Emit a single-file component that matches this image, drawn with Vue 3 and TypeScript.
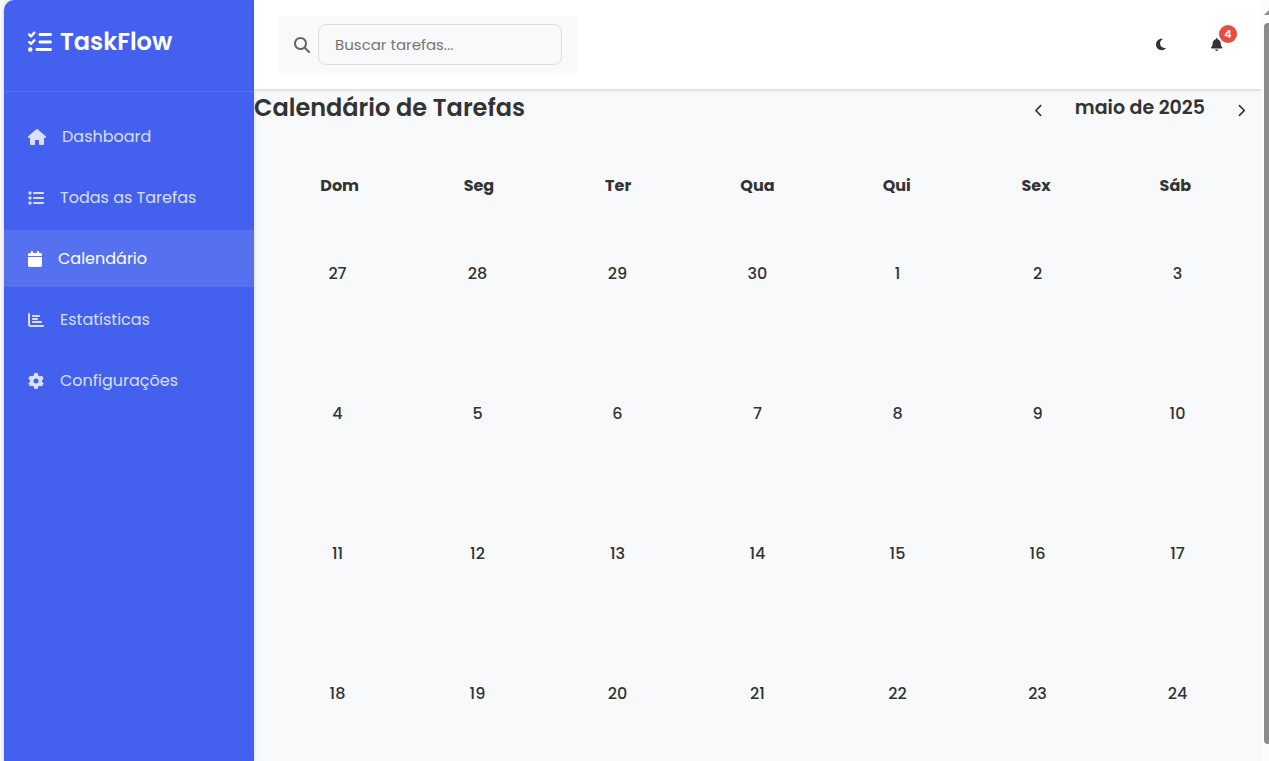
<script setup lang="ts">
interface Icon {
  width: number
  path: string
}

interface NavItem {
  label: string
  icon: Icon
  active?: boolean
}

const icons: Record<string, Icon> = {
  logo: {
    width: 512,
    path: 'M152.1 38.2c9.9 8.9 10.7 24 1.8 33.9l-72 80c-4.4 4.9-10.6 7.8-17.2 7.9s-12.9-2.4-17.6-7L7 113C-2.3 103.6-2.3 88.4 7 79s24.6-9.4 33.9 0l22.1 22.1 55.1-61.2c8.9-9.9 24-10.7 33.9-1.8zm0 160c9.9 8.9 10.7 24 1.8 33.9l-72 80c-4.4 4.9-10.6 7.8-17.2 7.9s-12.9-2.4-17.6-7L7 273c-9.4-9.4-9.4-24.6 0-33.9s24.6-9.4 33.9 0l22.1 22.1 55.1-61.2c8.9-9.9 24-10.7 33.9-1.8zM224 96c0-17.7 14.3-32 32-32H480c17.7 0 32 14.3 32 32s-14.3 32-32 32H256c-17.7 0-32-14.3-32-32zm0 160c0-17.7 14.3-32 32-32H480c17.7 0 32 14.3 32 32s-14.3 32-32 32H256c-17.7 0-32-14.3-32-32zM160 416c0-17.7 14.3-32 32-32H480c17.7 0 32 14.3 32 32s-14.3 32-32 32H192c-17.7 0-32-14.3-32-32zM48 368a48 48 0 1 1 0 96 48 48 0 1 1 0-96z',
  },
  home: {
    width: 576,
    path: 'M575.8 255.5c0 18-15 32.1-32 32.1h-32l.7 160.2c0 2.7-.2 5.4-.5 8.1V472c0 22.1-17.9 40-40 40H456c-1.1 0-2.2 0-3.3-.1c-1.4 .1-2.8 .1-4.2 .1H416 392c-22.1 0-40-17.9-40-40V448 384c0-17.7-14.3-32-32-32H256c-17.7 0-32 14.3-32 32v64 24c0 22.1-17.9 40-40 40H160 128.1c-1.5 0-3-.1-4.5-.2c-1.2 .1-2.4 .2-3.6 .2H104c-22.1 0-40-17.9-40-40V360c0-.9 0-1.9 .1-2.8V287.6H32c-18 0-32-14-32-32.1c0-9 3-17 10-24L266.4 8c7-7 15-8 22-8s15 2 21 7L564.8 231.5c8 7 12 15 11 24z',
  },
  list: {
    width: 512,
    path: 'M40 48C26.7 48 16 58.7 16 72v48c0 13.3 10.7 24 24 24H88c13.3 0 24-10.7 24-24V72c0-13.3-10.7-24-24-24H40zM192 64c-17.7 0-32 14.3-32 32s14.3 32 32 32H480c17.7 0 32-14.3 32-32s-14.3-32-32-32H192zm0 160c-17.7 0-32 14.3-32 32s14.3 32 32 32H480c17.7 0 32-14.3 32-32s-14.3-32-32-32H192zm0 160c-17.7 0-32 14.3-32 32s14.3 32 32 32H480c17.7 0 32-14.3 32-32s-14.3-32-32-32H192zM16 232v48c0 13.3 10.7 24 24 24H88c13.3 0 24-10.7 24-24V232c0-13.3-10.7-24-24-24H40c-13.3 0-24 10.7-24 24zM40 368c-13.3 0-24 10.7-24 24v48c0 13.3 10.7 24 24 24H88c13.3 0 24-10.7 24-24V392c0-13.3-10.7-24-24-24H40z',
  },
  calendar: {
    width: 448,
    path: 'M96 32V64H48C21.5 64 0 85.5 0 112v48H448V112c0-26.5-21.5-48-48-48H352V32c0-17.7-14.3-32-32-32s-32 14.3-32 32V64H160V32c0-17.7-14.3-32-32-32S96 14.3 96 32zM448 192H0V464c0 26.5 21.5 48 48 48H400c26.5 0 48-21.5 48-48V192z',
  },
  chart: {
    width: 512,
    path: 'M32 32c17.7 0 32 14.3 32 32V400c0 8.8 7.2 16 16 16H480c17.7 0 32 14.3 32 32s-14.3 32-32 32H80c-44.2 0-80-35.8-80-80V64C0 46.3 14.3 32 32 32zm96 96c0-17.7 14.3-32 32-32l192 0c17.7 0 32 14.3 32 32s-14.3 32-32 32l-192 0c-17.7 0-32-14.3-32-32zm32 64H288c17.7 0 32 14.3 32 32s-14.3 32-32 32H160c-17.7 0-32-14.3-32-32s14.3-32 32-32zm0 96H416c17.7 0 32 14.3 32 32s-14.3 32-32 32H160c-17.7 0-32-14.3-32-32s14.3-32 32-32z',
  },
  gear: {
    width: 512,
    path: 'M495.9 166.6c3.2 8.7 .5 18.4-6.4 24.6l-43.3 39.4c1.1 8.3 1.7 16.8 1.7 25.4s-.6 17.1-1.7 25.4l43.3 39.4c6.9 6.2 9.6 15.9 6.4 24.6c-4.4 11.9-9.7 23.3-15.8 34.3l-4.7 8.1c-6.6 11-14 21.4-22.1 31.2c-5.9 7.2-15.7 9.6-24.5 6.8l-55.7-17.7c-13.4 10.3-28.2 18.9-44 25.4l-12.5 57.1c-2 9.1-9 16.3-18.2 17.8c-13.8 2.3-28 3.5-42.5 3.5s-28.7-1.2-42.5-3.5c-9.2-1.5-16.2-8.7-18.2-17.8l-12.5-57.1c-15.8-6.5-30.6-15.1-44-25.4L83.1 425.9c-8.8 2.8-18.6 .3-24.5-6.8c-8.1-9.8-15.5-20.2-22.1-31.2l-4.7-8.1c-6.1-11-11.4-22.4-15.8-34.3c-3.2-8.7-.5-18.4 6.4-24.6l43.3-39.4C64.6 273.1 64 264.6 64 256s.6-17.1 1.7-25.4L22.4 191.2c-6.9-6.2-9.6-15.9-6.4-24.6c4.4-11.9 9.7-23.3 15.8-34.3l4.7-8.1c6.6-11 14-21.4 22.1-31.2c5.9-7.2 15.7-9.6 24.5-6.8l55.7 17.7c13.4-10.3 28.2-18.9 44-25.4l12.5-57.1c2-9.1 9-16.3 18.2-17.8C227.3 1.2 241.5 0 256 0s28.7 1.2 42.5 3.5c9.2 1.5 16.2 8.7 18.2 17.8l12.5 57.1c15.8 6.5 30.6 15.1 44 25.4l55.7-17.7c8.8-2.8 18.6-.3 24.5 6.8c8.1 9.8 15.5 20.2 22.1 31.2l4.7 8.1c6.1 11 11.4 22.4 15.8 34.3zM256 336a80 80 0 1 0 0-160 80 80 0 1 0 0 160z',
  },
  search: {
    width: 512,
    path: 'M416 208c0 45.9-14.9 88.3-40 122.7L502.6 457.4c12.5 12.5 12.5 32.8 0 45.3s-32.8 12.5-45.3 0L330.7 376c-34.4 25.2-76.8 40-122.7 40C93.1 416 0 322.9 0 208S93.1 0 208 0S416 93.1 416 208zM208 352a144 144 0 1 0 0-288 144 144 0 1 0 0 288z',
  },
  moon: {
    width: 384,
    path: 'M223.5 32C100 32 0 132.3 0 256S100 480 223.5 480c60.6 0 115.5-24.2 155.8-63.4c5-4.9 6.3-12.5 3.1-18.7s-10.1-9.7-17-8.5c-9.8 1.7-19.8 2.6-30.1 2.6c-96.9 0-175.5-78.8-175.5-176c0-65.8 36-123.1 89.3-153.3c6.1-3.5 9.2-10.5 7.7-17.3s-7.3-11.9-14.3-12.5c-6.3-.5-12.6-.8-19-.8z',
  },
  bell: {
    width: 448,
    path: 'M224 0c-17.7 0-32 14.3-32 32V51.2C119 66 64 130.6 64 208v18.8c0 47-17.3 92.4-48.5 127.6l-7.4 8.3c-8.4 9.4-10.4 22.9-5.3 34.4S19.4 416 32 416H416c12.6 0 24-7.4 29.2-18.9s3.1-25-5.3-34.4l-7.4-8.3C401.3 319.2 384 273.9 384 226.8V208c0-77.4-55-142-128-156.8V32c0-17.7-14.3-32-32-32zm45.3 493.3c12-12 18.7-28.3 18.7-45.3H160c0 17 6.7 33.3 18.7 45.3s28.3 18.7 45.3 18.7s33.3-6.7 45.3-18.7z',
  },
  previous: {
    width: 320,
    path: 'M9.4 233.4c-12.5 12.5-12.5 32.8 0 45.3l192 192c12.5 12.5 32.8 12.5 45.3 0s12.5-32.8 0-45.3L77.3 256 246.6 86.6c12.5-12.5 12.5-32.8 0-45.3s-32.8-12.5-45.3 0l-192 192z',
  },
  next: {
    width: 320,
    path: 'M310.6 233.4c12.5 12.5 12.5 32.8 0 45.3l-192 192c-12.5 12.5-32.8 12.5-45.3 0s-12.5-32.8 0-45.3L242.7 256 73.4 86.6c-12.5-12.5-12.5-32.8 0-45.3s32.8-12.5 45.3 0l192 192z',
  },
}

const box = (icon: Icon): string => `0 0 ${icon.width} 512`

const navItems: NavItem[] = [
  { label: 'Dashboard', icon: icons.home },
  { label: 'Todas as Tarefas', icon: icons.list },
  { label: 'Calendário', icon: icons.calendar, active: true },
  { label: 'Estatísticas', icon: icons.chart },
  { label: 'Configurações', icon: icons.gear },
]

const weekdays: string[] = ['Dom', 'Seg', 'Ter', 'Qua', 'Qui', 'Sex', 'Sáb']

const weeks: number[][] = [
  [27, 28, 29, 30, 1, 2, 3],
  [4, 5, 6, 7, 8, 9, 10],
  [11, 12, 13, 14, 15, 16, 17],
  [18, 19, 20, 21, 22, 23, 24],
]
</script>

<template>
  <div class="app">
    <aside class="sidebar">
      <div class="brand">
        <svg class="brand-icon" :viewBox="box(icons.logo)" aria-hidden="true"><path :d="icons.logo.path" /></svg>
        <span>TaskFlow</span>
      </div>
      <nav class="nav">
        <a v-for="item in navItems" :key="item.label" href="#" class="nav-link" :class="{ active: item.active }">
          <svg class="nav-icon" :viewBox="box(item.icon)" aria-hidden="true"><path :d="item.icon.path" /></svg>
          <span>{{ item.label }}</span>
        </a>
      </nav>
    </aside>

    <div class="content">
      <header class="topbar">
        <label class="search">
          <svg class="search-icon" :viewBox="box(icons.search)" aria-hidden="true"><path :d="icons.search.path" /></svg>
          <input type="text" class="search-input" placeholder="Buscar tarefas..." aria-label="Buscar tarefas" />
        </label>
        <div class="actions">
          <button type="button" class="icon-button" aria-label="Alternar tema">
            <svg class="small-icon" :viewBox="box(icons.moon)" aria-hidden="true"><path :d="icons.moon.path" /></svg>
          </button>
          <button type="button" class="icon-button" aria-label="Notificações">
            <svg class="small-icon" :viewBox="box(icons.bell)" aria-hidden="true"><path :d="icons.bell.path" /></svg>
            <span class="badge">4</span>
          </button>
        </div>
      </header>

      <main>
        <div class="calendar-header">
          <h1 class="title">Calendário de Tarefas</h1>
          <div class="month-nav">
            <button type="button" class="icon-button" aria-label="Mês anterior">
              <svg class="chevron" :viewBox="box(icons.previous)" aria-hidden="true"><path :d="icons.previous.path" /></svg>
            </button>
            <h2 class="month">maio de 2025</h2>
            <button type="button" class="icon-button" aria-label="Próximo mês">
              <svg class="chevron" :viewBox="box(icons.next)" aria-hidden="true"><path :d="icons.next.path" /></svg>
            </button>
          </div>
        </div>

        <table class="calendar">
          <thead>
            <tr class="weekdays">
              <th v-for="day in weekdays" :key="day" scope="col">{{ day }}</th>
            </tr>
          </thead>
          <tbody class="weeks">
            <tr v-for="(week, index) in weeks" :key="index" class="week">
              <td v-for="day in week" :key="day">{{ day }}</td>
            </tr>
          </tbody>
        </table>
      </main>
    </div>

    <div class="scrollbar" aria-hidden="true">
      <svg class="scroll-arrow" viewBox="0 0 5 5"><path d="M0 5 5 0V5z" /></svg>
      <div class="scroll-thumb"></div>
    </div>
  </div>
</template>

<style>
body {
  background: #f8f9fb;
  overflow: hidden;
}
</style>

<style scoped>
.app {
  display: flex;
  box-sizing: border-box;
  height: 100vh;
  padding-left: 4px;
  overflow: hidden;
  color: #333333;
  font-family: Poppins, Inter, "Liberation Sans", sans-serif;
  font-size: 16px;
  line-height: 24px;
}

svg {
  display: block;
  flex: none;
  fill: currentColor;
}

.sidebar {
  flex: none;
  width: 250px;
  border-top-left-radius: 10px;
  background: #4361ee;
  color: #ffffff;
  box-shadow: 0 0 4px rgba(0, 0, 0, 0.15);
}

.brand {
  display: flex;
  align-items: center;
  gap: 8px;
  padding: 24px 24px 31px;
  border-bottom: 1px solid rgba(255, 255, 255, 0.1);
  font-size: 24px;
  font-weight: 600;
  line-height: 36px;
}

.brand-icon {
  height: 24px;
}

.nav {
  display: flex;
  flex-direction: column;
  gap: 4px;
  padding-top: 16px;
}

.nav-link {
  display: flex;
  align-items: center;
  gap: 16px;
  height: 57px;
  padding: 0 24px;
  color: rgba(255, 255, 255, 0.8);
  text-decoration: none;
}

.nav-link.active {
  background: rgba(255, 255, 255, 0.1);
  color: #ffffff;
}

.nav-icon,
.search-icon {
  height: 16px;
}

.content {
  display: flex;
  flex: 1;
  flex-direction: column;
  min-width: 0;
}

.topbar {
  display: flex;
  align-items: center;
  justify-content: space-between;
  padding: 16px 24px;
  border-bottom: 1px solid #dddddd;
  background: #ffffff;
  box-shadow: 0 1px 2px rgba(0, 0, 0, 0.1);
}

.search {
  display: flex;
  align-items: center;
  gap: 8px;
  box-sizing: border-box;
  width: 300px;
  padding: 8px 16px;
  border-radius: 8px;
  background: #f8f9fb;
  color: #666666;
}

.search-input {
  flex: 1;
  box-sizing: border-box;
  min-width: 0;
  height: 41px;
  padding: 0 16px;
  border: 1px solid #dddddd;
  border-radius: 8px;
  background: transparent;
  color: #333333;
  font: inherit;
  font-size: 15px;
}

.search-input::placeholder {
  color: #757575;
  opacity: 1;
}

.actions {
  display: flex;
  gap: 16px;
}

.icon-button {
  position: relative;
  display: flex;
  align-items: center;
  justify-content: center;
  width: 40px;
  height: 40px;
  padding: 0;
  border: 0;
  background: transparent;
  color: #333333;
  font: inherit;
}

.small-icon {
  height: 13px;
}

.badge {
  position: absolute;
  top: 0;
  right: 0;
  width: 18px;
  height: 18px;
  border-radius: 50%;
  background: #e74c3c;
  color: #ffffff;
  font-size: 11px;
  font-weight: 600;
  line-height: 18px;
  text-align: center;
}

.calendar-header {
  display: flex;
  justify-content: space-between;
}

.title,
.month {
  margin: 0;
  font-weight: 600;
  line-height: 36px;
}

.title {
  font-size: 24px;
}

.month-nav {
  display: flex;
  gap: 16px;
}

.month {
  font-size: 19px;
}

.chevron {
  height: 13px;
}

.calendar {
  display: block;
  padding: 36px 16px 0;
}

.calendar thead {
  display: block;
}

.weekdays,
.week {
  display: grid;
  grid-template-columns: repeat(7, 1fr);
}

.weekdays th,
.week td {
  padding: 0;
  text-align: center;
}

.weekdays th {
  padding: 8px 0;
  font-weight: 700;
}

.weeks {
  display: grid;
  gap: 5px;
}

.week {
  gap: 5px;
}

.week td {
  display: flex;
  align-items: center;
  justify-content: center;
  aspect-ratio: 1;
  font-weight: 500;
}

.scrollbar {
  display: flex;
  flex: none;
  flex-direction: column;
  gap: 8px;
  align-items: flex-end;
  box-sizing: border-box;
  width: 8px;
  padding: 10px 0 17px;
  overflow: hidden;
  background: #fcfcfc;
}

.scroll-arrow {
  width: 5px;
  height: 5px;
  fill: #8b8b8b;
}

.scroll-thumb {
  flex: 1;
  width: 5px;
  border-radius: 4px 0 0 4px;
  background: #8b8b8b;
}
</style>
